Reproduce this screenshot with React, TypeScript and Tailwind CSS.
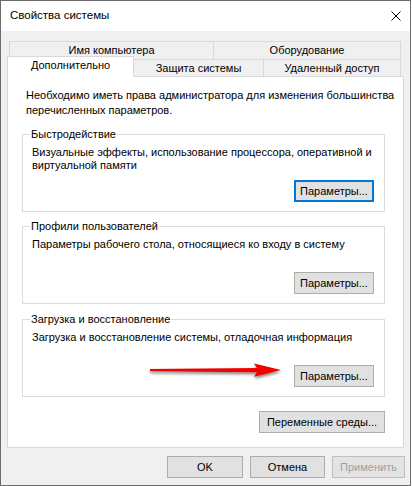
import type { ReactNode } from "react";

const font = { fontFamily: '"Liberation Sans", Arial, sans-serif' };

function WinButton({
  children,
  width,
  focused = false,
  disabled = false,
}: {
  children: ReactNode;
  width: string;
  focused?: boolean;
  disabled?: boolean;
}) {
  const base = "flex h-[22px] items-center justify-center whitespace-nowrap text-[11px] leading-none";
  const look = focused
    ? "border-2 border-[#0078d7] bg-[#e1e1e1] text-black"
    : disabled
      ? "border border-[#bfbfbf] bg-[#e3e3e3] text-[#a0a0a0]"
      : "border border-[#adadad] bg-[#e1e1e1] text-black";
  return <div className={`${base} ${look} ${width}`}>{children}</div>;
}

function Group({
  title,
  children,
  focused = false,
  className = "",
}: {
  title: string;
  children: ReactNode;
  focused?: boolean;
  className?: string;
}) {
  return (
    <fieldset
      className={`ml-[14px] flex h-[85px] w-[363px] min-w-0 flex-col border border-[#dcdcdc] pr-[10px] pb-[9px] pl-[9px] ${className}`}
    >
      <legend className="-ml-[2px] px-[1px] text-[11px] leading-[15px]">{title}</legend>
      <p className="whitespace-nowrap pt-[4px] text-[11px] leading-[13px]">{children}</p>
      <div className="mt-auto flex justify-end">
        <WinButton width="w-[80px]" focused={focused}>
          Параметры...
        </WinButton>
      </div>
    </fieldset>
  );
}

export default function App() {
  return (
    <div
      className="relative h-[486px] w-[411px] overflow-hidden border border-[#6b6b6b] bg-[#f0f0f0] text-black select-none"
      style={font}
    >
      {/* title bar */}
      <div className="flex h-[30px] items-center justify-between bg-white pl-[9px] pr-[8px]">
        <span className="text-[11.5px]">Свойства системы</span>
        <svg width="10" height="10" viewBox="0 0 10 10" className="mr-[1px]">
          <path d="M0.5 0.5 L9.5 9.5 M9.5 0.5 L0.5 9.5" stroke="#000" strokeWidth="1" fill="none" />
        </svg>
      </div>

      {/* tabs */}
      <div className="ml-[6px] mt-[10px]">
        <div className="ml-[2px] flex h-[18px] text-[11px]">
          <div className="flex w-[204px] items-center justify-center border-l border-t border-[#d9d9d9]">
            Имя компьютера
          </div>
          <div className="flex w-[188px] items-center justify-center border-l border-r border-t border-[#d9d9d9]">
            Оборудование
          </div>
        </div>
        <div className="flex h-[17px] items-end text-[11px]">
          <div className="relative z-10 -mb-[1px] flex h-[21px] w-[127px] justify-center border-l border-r border-t border-[#d9d9d9] bg-white pt-[1px] leading-[15px]">
            Дополнительно
          </div>
          <div className="flex h-[17px] w-[129px] items-center justify-center border-t border-[#d9d9d9] pt-[1px]">
            Защита системы
          </div>
          <div className="flex h-[17px] w-[138px] items-center justify-center border-l border-r border-t border-[#d9d9d9] pt-[1px]">
            Удаленный доступ
          </div>
        </div>

        {/* tab page */}
        <div className="h-[372px] w-[397px] border border-[#d9d9d9] bg-white pt-[11px]">
          <p className="whitespace-nowrap pl-[18px] text-[11px] leading-[15px]">
            Необходимо иметь права администратора для изменения большинства
            <br />
            перечисленных параметров.
          </p>

          <Group title="Быстродействие" focused className="mt-[9px]">
            Визуальные эффекты, использование процессора, оперативной и
            <br />
            виртуальной памяти
          </Group>

          <Group title="Профили пользователей" className="mt-[7px]">
            Параметры рабочего стола, относящиеся ко входу в систему
          </Group>

          <Group title="Загрузка и восстановление" className="mt-[8px]">
            Загрузка и восстановление системы, отладочная информация
          </Group>

          <div className="mt-[14px] flex justify-end pr-[18px]">
            <WinButton width="w-[126px]">Переменные среды...</WinButton>
          </div>
        </div>
      </div>

      {/* dialog buttons */}
      <div className="mt-[8px] flex justify-end gap-[7px] pr-[5px]">
        <WinButton width="w-[76px]">OK</WinButton>
        <WinButton width="w-[75px]">Отмена</WinButton>
        <WinButton width="w-[73px]" disabled>
          Применить
        </WinButton>
      </div>

      {/* red annotation arrow */}
      <svg
        className="absolute left-[146px] top-[358px]"
        width="140"
        height="24"
        viewBox="0 0 140 24"
      >
        <defs>
          <filter id="arrowShadow" x="-10%" y="-50%" width="120%" height="200%">
            <feDropShadow dx="0" dy="2" stdDeviation="1.4" floodColor="#000" floodOpacity="0.5" />
          </filter>
        </defs>
        <path
          d="M3 10 L110 9 L107 4.5 L134 11 L107 17.8 L110 13.2 L3 12.3 Z"
          fill="#f00000"
          filter="url(#arrowShadow)"
        />
      </svg>
    </div>
  );
}
